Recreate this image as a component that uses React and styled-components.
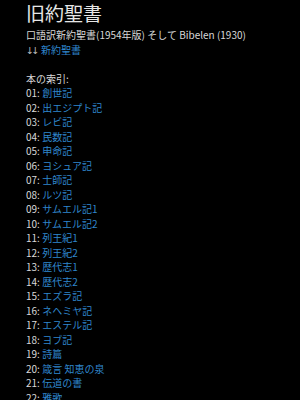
import React from "react";
import styled, { createGlobalStyle } from "styled-components";

const Global = createGlobalStyle`
  html, body { margin: 0; padding: 0; background: #000; }
  body { font-family: "Noto Sans CJK JP", "Noto Sans", sans-serif; }
`;

const Page = styled.div`
  background: #000;
  padding: 0 0 0 26px;
  color: #d8d8d8;
  font-size: 10px;
  line-height: 14.5px;
  overflow: hidden;
  height: 400px;
  box-sizing: border-box;
`;

const Title = styled.h1`
  margin: 0 0 2px 0;
  font-size: 19px;
  line-height: 26px;
  font-weight: 400;
  color: #e6e6e6;
`;

const Line = styled.div`
  white-space: nowrap;
  height: 14.5px;
  margin-bottom: ${(p) => (p.$gap ? "14.5px" : "0")};
`;

const Arrows = styled.span`
  font-family: "DejaVu Sans", sans-serif;
  font-size: 9.5px;
  line-height: 14.5px;
  letter-spacing: -2.5px;
  color: #bdbdbd;
  margin-right: 4px;
`;

const Link = styled.a`
  color: #2f86cc;
  text-decoration: none;
`;

const List = styled.ol`
  list-style: none;
  margin: 0;
  padding: 0;
`;

const Item = styled.li`
  white-space: nowrap;
`;

const books = [
  "創世記", "出エジプト記", "レビ記", "民数記", "申命記", "ヨシュア記", "士師記",
  "ルツ記", "サムエル記1", "サムエル記2", "列王紀1", "列王紀2", "歴代志1", "歴代志2",
  "エズラ記", "ネヘミヤ記", "エステル記", "ヨブ記", "詩篇", "箴言 知恵の泉", "伝道の書",
  "雅歌", "イザヤ書",
];

export default function App() {
  return (
    <>
      <Global />
      <Page>
        <Title>旧約聖書</Title>
        <Line>口語訳新約聖書(1954年版) そして Bibelen (1930)</Line>
        <Line $gap><Arrows>↓↓</Arrows><Link href="#">新約聖書</Link></Line>
        <Line>本の索引:</Line>
        <List>
          {books.map((b, i) => (
            <Item key={b}>
              {String(i + 1).padStart(2, "0")}: <Link href="#">{b}</Link>
            </Item>
          ))}
        </List>
      </Page>
    </>
  );
}
